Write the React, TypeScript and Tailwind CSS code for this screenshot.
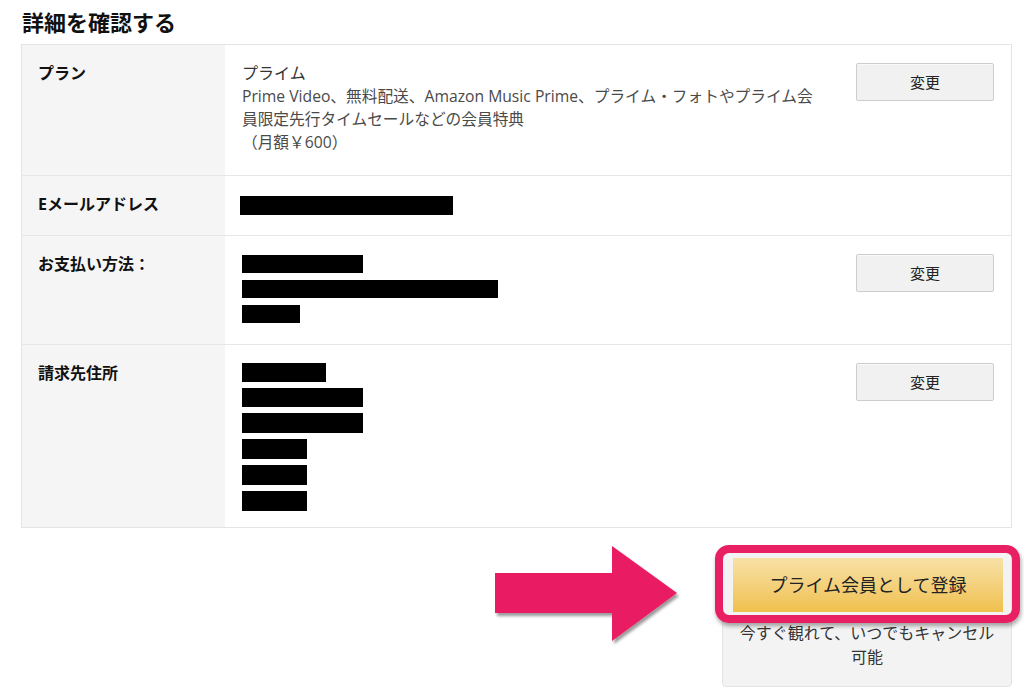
import type { ReactNode } from 'react';

const font = "font-['Open_Sans','Noto_Sans_CJK_JP',sans-serif]";

function ChangeButton() {
    return (
        <button className="w-[138px] h-[38px] rounded-[2px] border border-[#cdcdcd] bg-[#f1f1f1] text-[15px] text-[#222] leading-none shadow-[0_1px_0_rgba(255,255,255,0.6)_inset]">
            変更
        </button>
    );
}

function Bar({ w, h = 19 }: { w: number; h?: number }) {
    return <div className="bg-black" style={{ width: w, height: h }} />;
}

interface RowProps {
    label: string;
    height: string;
    children: ReactNode;
    action?: boolean;
    last?: boolean;
}

function Row({ label, height, children, action, last }: RowProps) {
    return (
        <div className={`flex ${height} ${last ? '' : 'border-b border-[#e7e7e7]'}`}>
            <div className="w-[203px] shrink-0 bg-[#f5f5f5] pl-[16px] pt-[16px] text-[16px] leading-[24px] font-bold text-[#111]">
                {label}
            </div>
            <div className="flex-1 pl-[17px]">{children}</div>
            {action && (
                <div className="pt-[18px] pr-[17px]">
                    <ChangeButton />
                </div>
            )}
        </div>
    );
}

function Arrow() {
    return (
        <svg width="200" height="112" viewBox="0 0 200 112" className="-mt-[9px] shrink-0">
            <defs>
                <filter id="arrowShadow" x="-10%" y="-10%" width="130%" height="130%">
                    <feDropShadow dx="2" dy="3" stdDeviation="1.6" floodColor="#000" floodOpacity="0.4" />
                </filter>
            </defs>
            <path
                d="M5 33 H122 V6 L187 53 L122 101 V73 H5 Z"
                fill="#e91f63"
                filter="url(#arrowShadow)"
            />
        </svg>
    );
}

export default function App() {
    return (
        <div className={`w-[1024px] h-[696px] bg-white overflow-hidden text-[#111] ${font}`}>
            <div className="pl-[21px] w-[1012px]">
                <h1 className="pt-[7px] pl-[1px] text-[22px] leading-[30px] font-bold text-[#111]">詳細を確認する</h1>

                <div className="mt-[7px] border border-[#e4e4e4]">
                    <Row label="プラン" height="h-[131px]" action>
                        <div className="pt-[16px] text-[16px] leading-[24px] text-[#333]">プライム</div>
                        <div className="text-[15.7px] leading-[23px] text-[#4a4a4a] whitespace-nowrap">
                            Prime Video、無料配送、Amazon Music Prime、プライム・フォトやプライム会
                            <br />
                            員限定先行タイムセールなどの会員特典
                            <br />
                            （月額￥600）
                        </div>
                    </Row>

                    <Row label="Eメールアドレス" height="h-[60px]">
                        <div className="pt-[20px] -ml-[2px]">
                            <Bar w={213} />
                        </div>
                    </Row>

                    <Row label="お支払い方法：" height="h-[109px]" action>
                        <div className="pt-[19px] flex flex-col gap-[7px]">
                            <Bar w={121} h={18} />
                            <Bar w={256} h={18} />
                            <Bar w={58} h={18} />
                        </div>
                    </Row>

                    <Row label="請求先住所" height="h-[182px]" action last>
                        <div className="pt-[18px] flex flex-col gap-[6px]">
                            <Bar w={84} />
                            <Bar w={121} />
                            <Bar w={121} h={20} />
                            <Bar w={65} h={20} />
                            <Bar w={65} h={20} />
                            <Bar w={65} h={20} />
                        </div>
                    </Row>
                </div>

                <div className="mt-[21px] flex justify-end items-start gap-[32px]">
                    <Arrow />
                    <div className="relative w-[290px] h-[138px] rounded-[4px] border border-[#e3e3e3] bg-[#f3f3f3] pt-[8px]">
                        <button className="mx-[10px] w-[270px] h-[54px] bg-gradient-to-b from-[#f8e1a6] to-[#efc04a] text-[18px] text-[#222] leading-none">
                            プライム会員として登録
                        </button>
                        <p className="mt-[9px] text-center text-[16px] leading-[24px] text-[#333]">
                            今すぐ観れて、いつでもキャンセル
                            <br />
                            可能
                        </p>
                        <div className="absolute left-[-8px] top-[-5px] w-[305px] h-[78px] rounded-[14px] border-[8px] border-[#e91f63] shadow-[1px_3px_4px_rgba(0,0,0,0.35)]" />
                    </div>
                </div>
            </div>
        </div>
    );
}
